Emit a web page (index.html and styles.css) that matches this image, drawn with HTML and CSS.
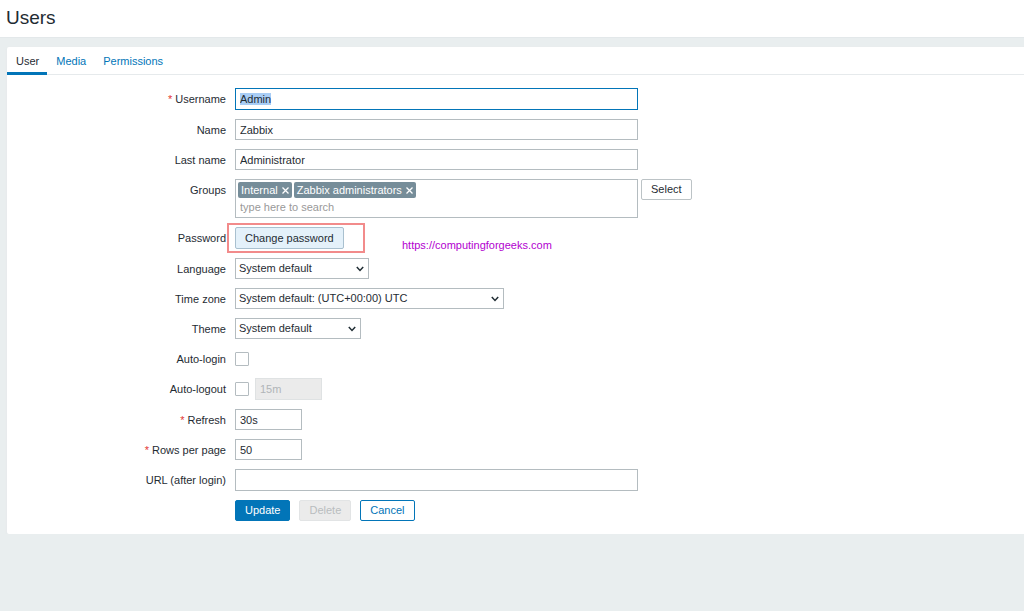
FILE: index.html
```html
<!DOCTYPE html>
<html lang="en">

<head>
    <meta charset="utf-8" />
    <meta name="viewport" content="width=device-width, initial-scale=1" />
    <title>Users</title>
    <link rel="stylesheet" href="styles.css">
</head>

<body>
    <header class="page-header">
        <h1>Users</h1>
    </header>

    <main class="panel">
        <nav class="tabs">
            <a class="tab active" href="#user">User</a>
            <a class="tab" href="#media">Media</a>
            <a class="tab" href="#permissions">Permissions</a>
        </nav>

        <form class="form-grid" id="user">
            <label class="required" for="username">Username</label>
            <div class="field">
                <input class="text-input wide tall" id="username" type="text" value="Admin" autocomplete="off" />
            </div>

            <label for="name">Name</label>
            <div class="field">
                <input class="text-input wide" id="name" type="text" value="Zabbix" />
            </div>

            <label for="surname">Last name</label>
            <div class="field">
                <input class="text-input wide" id="surname" type="text" value="Administrator" />
            </div>

            <label for="groups">Groups</label>
            <div class="field">
                <div class="multiselect wide">
                    <div class="tags">
                        <span class="tag">Internal
                            <button class="tag-remove" type="button" aria-label="Remove Internal">
                                <svg width="7" height="7" viewBox="0 0 7 7" stroke="currentColor" stroke-width="1.3">
                                    <path d="M.5 .5l6 6M6.5 .5l-6 6" />
                                </svg>
                            </button>
                        </span>
                        <span class="tag">Zabbix administrators
                            <button class="tag-remove" type="button" aria-label="Remove Zabbix administrators">
                                <svg width="7" height="7" viewBox="0 0 7 7" stroke="currentColor" stroke-width="1.3">
                                    <path d="M.5 .5l6 6M6.5 .5l-6 6" />
                                </svg>
                            </button>
                        </span>
                    </div>
                    <input class="multiselect-input" id="groups" type="text" placeholder="type here to search" />
                </div>
                <button class="btn btn-grey" type="button">Select</button>
            </div>

            <label for="change-password">Password</label>
            <div class="field password-field">
                <button class="btn btn-hover tall" id="change-password" type="button">Change password</button>
                <span class="highlight-box"></span>
                <a class="watermark" href="https://computingforgeeks.com">https://computingforgeeks.com</a>
            </div>

            <label for="language">Language</label>
            <div class="field">
                <div class="select select-language">
                    <select id="language">
                        <option>System default</option>
                    </select>
                    <svg class="chevron" width="8" height="6" viewBox="0 0 8 6">
                        <path d="M.8 1l3.2 3.4L7.2 1" />
                    </svg>
                </div>
            </div>

            <label for="timezone">Time zone</label>
            <div class="field">
                <div class="select select-timezone">
                    <select id="timezone">
                        <option>System default: (UTC+00:00) UTC</option>
                    </select>
                    <svg class="chevron" width="8" height="6" viewBox="0 0 8 6">
                        <path d="M.8 1l3.2 3.4L7.2 1" />
                    </svg>
                </div>
            </div>

            <label for="theme">Theme</label>
            <div class="field">
                <div class="select select-theme">
                    <select id="theme">
                        <option>System default</option>
                    </select>
                    <svg class="chevron" width="8" height="6" viewBox="0 0 8 6">
                        <path d="M.8 1l3.2 3.4L7.2 1" />
                    </svg>
                </div>
            </div>

            <label for="autologin">Auto-login</label>
            <div class="field check-field">
                <input class="checkbox" id="autologin" type="checkbox" />
            </div>

            <label for="autologout">Auto-logout</label>
            <div class="field check-field">
                <input class="checkbox" id="autologout" type="checkbox" />
                <input class="text-input small tall" type="text" value="15m" aria-label="Auto-logout time" disabled />
            </div>

            <label class="required" for="refresh">Refresh</label>
            <div class="field">
                <input class="text-input small" id="refresh" type="text" value="30s" />
            </div>

            <label class="required" for="rows">Rows per page</label>
            <div class="field">
                <input class="text-input small" id="rows" type="text" value="50" />
            </div>

            <label for="url">URL (after login)</label>
            <div class="field">
                <input class="text-input wide tall" id="url" type="text" />
            </div>

            <div class="field actions">
                <button class="btn btn-primary" type="submit">Update</button>
                <button class="btn" type="button" disabled>Delete</button>
                <button class="btn btn-alt" type="button">Cancel</button>
            </div>
        </form>
    </main>

    <script>
        const username = document.getElementById("username");
        username.focus();
        username.select();
    </script>
</body>

</html>
```
FILE: styles.css
```css
:root {
    --accent: #0275b8;
    --bg: #e9eeef;
    --text: #1f2c33;
    --border: #b4bcc0;
    --tag: #768d99;
    --row-height: 21px;
}

* {
    box-sizing: border-box;
}

body {
    margin: 0;
    background: var(--bg);
    color: var(--text);
    font-family: "Liberation Sans", Arial, Helvetica, sans-serif;
    font-size: 11px;
    line-height: 13px;
}

input,
select,
button {
    margin: 0;
    font: inherit;
    color: inherit;
}

a {
    color: var(--accent);
    text-decoration: none;
}

.page-header {
    padding: 7px 6px 8px;
    background: #fff;
    border-bottom: 1px solid #e3e8ea;
}

h1 {
    margin: 0;
    font-size: 19px;
    font-weight: 400;
    line-height: 22px;
}

.panel {
    margin: 9px 0 0 7px;
    padding-bottom: 13px;
    background: #fff;
    border-radius: 2px 0 0 2px;
    box-shadow: 0 1px 2px #e2e5e6;
}

/* Tabs */
.tabs {
    display: flex;
    border-bottom: 1px solid #e6eaec;
}

.tab {
    margin-bottom: -1px;
    padding: 8px 8px 4px 9px;
    border-bottom: 3px solid transparent;
}

.tab.active {
    color: var(--text);
    border-bottom-color: var(--accent);
}

/* Form */
.form-grid {
    display: grid;
    grid-template-columns: 219px 1fr;
    gap: 9px;
    padding-top: 13px;
}

label {
    padding-top: 5px;
    text-align: right;
}

.required::before {
    content: "* ";
    color: #e33734;
}

.field {
    display: flex;
    align-items: flex-start;
    gap: 3px;
    min-height: var(--row-height);
}

.text-input {
    height: var(--row-height);
    padding: 0 4px;
    border: 1px solid var(--border);
    border-radius: 0;
    background: #fff;
    outline: none;
}

.text-input:focus {
    border-color: var(--accent);
}

.text-input::selection {
    background: #a9cdf5;
    color: var(--text);
}

.text-input:disabled {
    color: #b0b5b8;
    background: #ebebeb;
    border-color: #dfe2e3;
}

.wide {
    width: 403px;
}

.small {
    width: 67px;
}

.tall {
    height: 22px;
}

.multiselect {
    padding: 2px;
    border: 1px solid var(--border);
}

.tags {
    display: flex;
    gap: 2px;
}

.tag {
    display: flex;
    align-items: center;
    gap: 4px;
    height: 16px;
    padding: 0 3px;
    color: #fff;
    background: var(--tag);
    border-radius: 2px;
}

.tag-remove {
    display: flex;
    padding: 0;
    border: 0;
    background: none;
    cursor: pointer;
}

.multiselect-input {
    display: block;
    width: 100%;
    height: 17px;
    padding: 2px;
    border: 0;
    outline: none;
}

.multiselect-input::placeholder {
    color: #999;
}

/* Selects */
.select {
    position: relative;
}

.select select {
    width: 100%;
    height: var(--row-height);
    padding: 0 16px 0 3px;
    border: 1px solid var(--border);
    border-radius: 0;
    background: #fff;
    appearance: none;
}

.select-language {
    width: 134px;
}

.select-timezone {
    width: 269px;
}

.select-theme {
    width: 126px;
}

.chevron {
    position: absolute;
    top: 8px;
    right: 5px;
    fill: none;
    stroke: var(--text);
    stroke-width: 1.5;
    pointer-events: none;
}

/* Checkboxes */
.check-field {
    align-items: center;
    gap: 6px;
}

.checkbox {
    width: 14px;
    height: 14px;
    border: 1px solid var(--border);
    border-radius: 1px;
    background: #fff;
    appearance: none;
}

/* Buttons */
.btn {
    min-height: var(--row-height);
    padding: 0 9px;
    border: 1px solid var(--accent);
    border-radius: 2px;
    background: #fff;
    cursor: pointer;
}

.btn-grey {
    border-color: #bcc3c6;
}

.btn-hover {
    background: #e4f1fa;
    border-color: #a9c0cf;
}

.btn-primary {
    color: #fff;
    background: var(--accent);
}

.btn-alt {
    color: var(--accent);
}

.btn:disabled {
    color: #b9bdbf;
    background: #ebebeb;
    border-color: #e2e4e5;
    cursor: default;
}

.actions {
    grid-column: 2;
    gap: 9px;
}

/* Annotations over the password row */
.password-field {
    position: relative;
}

.highlight-box {
    position: absolute;
    top: -4px;
    left: -8px;
    width: 138px;
    height: 30px;
    border: 2px solid #f28b8b;
    pointer-events: none;
}

.watermark {
    position: absolute;
    top: 12px;
    left: 167px;
    color: #b200d0;
}
```
